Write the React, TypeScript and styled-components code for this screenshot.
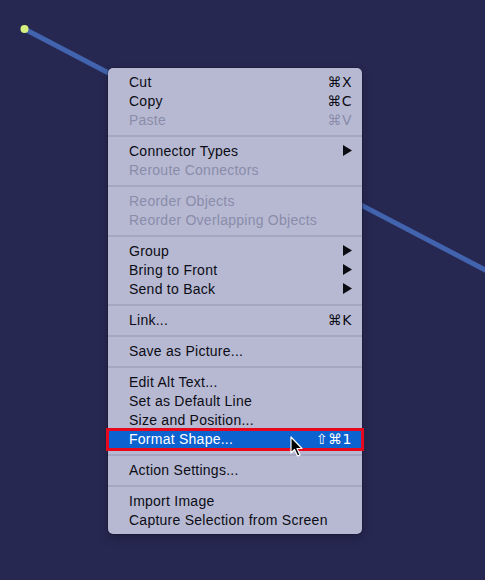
import React from 'react';
import styled, { createGlobalStyle } from 'styled-components';

const GlobalStyle = createGlobalStyle`
  html, body {
    margin: 0;
    padding: 0;
    background: #262852;
  }
  body {
    font-family: "Liberation Sans", Arial, sans-serif;
  }
`;

const Canvas = styled.div`
  position: relative;
  width: 485px;
  height: 580px;
  overflow: hidden;
  background: #262852;
`;

const Drawing = styled.svg`
  position: absolute;
  left: 0;
  top: 0;
`;

const Menu = styled.div`
  position: absolute;
  left: 108px;
  top: 68px;
  width: 254px;
  padding: 5px 0 4px;
  box-sizing: border-box;
  background: #b7b9d3;
  border-radius: 5px;
  box-shadow: 0 0 0 1px rgba(20, 20, 40, 0.35), 0 4px 10px rgba(0, 0, 0, 0.25);
  display: flex;
  flex-direction: column;
`;

const Row = styled.div<{ $disabled?: boolean; $active?: boolean }>`
  position: relative;
  box-sizing: border-box;
  display: flex;
  align-items: center;
  justify-content: space-between;
  height: 19px;
  padding: 0 10px 2px 21px;
  font-size: 14px;
  letter-spacing: 0.25px;
  color: ${(p) => (p.$active ? '#ffffff' : p.$disabled ? '#8a8ca9' : '#0c0c14')};
  background: ${(p) => (p.$active ? '#0c63cf' : 'transparent')};
  ${(p) =>
    p.$active &&
    `
    outline: 3px solid #e8081e;
    outline-offset: -1px;
  `}
`;

const Label = styled.span`
  white-space: nowrap;
`;

const Shortcut = styled.span`
  font-family: "DejaVu Sans", "Liberation Sans", sans-serif;
  font-size: 14px;
  letter-spacing: 0.5px;
`;

const Separator = styled.div`
  height: 2px;
  margin: 5px 0;
  background: #a5a7c2;
`;

const Pointer = styled.svg`
  position: absolute;
  left: 182px;
  top: 6px;
`;

type Item =
  | { sep: true }
  | { label: string; shortcut?: string; submenu?: boolean; disabled?: boolean; active?: boolean };

const items: Item[] = [
  { label: 'Cut', shortcut: '⌘X' },
  { label: 'Copy', shortcut: '⌘C' },
  { label: 'Paste', shortcut: '⌘V', disabled: true },
  { sep: true },
  { label: 'Connector Types', submenu: true },
  { label: 'Reroute Connectors', disabled: true },
  { sep: true },
  { label: 'Reorder Objects', disabled: true },
  { label: 'Reorder Overlapping Objects', disabled: true },
  { sep: true },
  { label: 'Group', submenu: true },
  { label: 'Bring to Front', submenu: true },
  { label: 'Send to Back', submenu: true },
  { sep: true },
  { label: 'Link...', shortcut: '⌘K' },
  { sep: true },
  { label: 'Save as Picture...' },
  { sep: true },
  { label: 'Edit Alt Text...' },
  { label: 'Set as Default Line' },
  { label: 'Size and Position...' },
  { label: 'Format Shape...', shortcut: '⇧⌘1', active: true },
  { sep: true },
  { label: 'Action Settings...' },
  { sep: true },
  { label: 'Import Image' },
  { label: 'Capture Selection from Screen' },
];

const SubmenuArrow = () => (
  <svg width="9" height="11" viewBox="0 0 9 11">
    <path d="M0 0 L9 5.5 L0 11 Z" fill="#0c0c14" />
  </svg>
);

const MousePointer = () => (
  <Pointer width="14" height="22" viewBox="0 0 14 22">
    <path
      d="M1 1 L1 17 L4.5 13.5 L7.5 20 L10 19 L7 12.5 L12 12.5 Z"
      fill="#000"
      stroke="#fff"
      strokeWidth="1.2"
      strokeLinejoin="round"
    />
  </Pointer>
);

const App: React.FC = () => {
  return (
    <>
      <GlobalStyle />
      <Canvas>
        <Drawing width="485" height="580" viewBox="0 0 485 580">
          <line x1="24.5" y1="29" x2="600" y2="330" stroke="#4263ad" strokeWidth="5" />
          <circle cx="24.5" cy="29" r="4" fill="#d5f07f" />
        </Drawing>
        <Menu>
          {items.map((item, i) =>
            'sep' in item ? (
              <Separator key={i} />
            ) : (
              <Row key={i} $disabled={item.disabled} $active={item.active}>
                <Label>{item.label}</Label>
                {item.shortcut && <Shortcut>{item.shortcut}</Shortcut>}
                {item.submenu && <SubmenuArrow />}
                {item.active && <MousePointer />}
              </Row>
            )
          )}
        </Menu>
      </Canvas>
    </>
  );
};

export default App;
